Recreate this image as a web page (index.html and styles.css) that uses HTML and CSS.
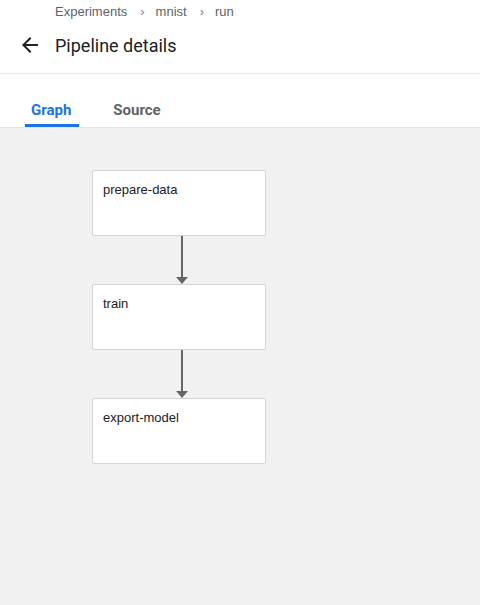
FILE: index.html
```html
<!DOCTYPE html>
<html>
<head>
<meta charset="utf-8">
<link rel="stylesheet" href="styles.css">
</head>
<body>
<div class="page">
  <header class="header">
    <nav class="crumbs">
      <span>Experiments</span><span class="sep">›</span><span>mnist</span><span class="sep">›</span><span>run</span>
    </nav>
    <div class="title-row">
      <svg class="back" width="24" height="24" viewBox="0 0 24 24"><path d="M20 11H7.83l5.59-5.59L12 4l-8 8 8 8 1.41-1.41L7.83 13H20v-2z" fill="#202124"/></svg>
      <h1 class="title">Pipeline details</h1>
    </div>
  </header>
  <div class="tabs">
    <div class="tab active">Graph</div>
    <div class="tab">Source</div>
  </div>
  <main class="canvas">
    <div class="graph">
      <div class="node">prepare-data</div>
      <div class="edge"><div class="line"></div><div class="head"></div></div>
      <div class="node">train</div>
      <div class="edge"><div class="line"></div><div class="head"></div></div>
      <div class="node">export-model</div>
    </div>
  </main>
</div>
</body>
</html>
```
FILE: styles.css
```css
* { box-sizing: border-box; }
html, body { margin: 0; padding: 0; height: 100%; }
body { font-family: "Roboto", "Liberation Sans", sans-serif; color: #202124; background: #fff; }
.page { display: flex; flex-direction: column; height: 605px; }
.header { border-bottom: 1px solid #e8e8e8; height: 74px; }
.crumbs { display: flex; align-items: center; padding-left: 55px; height: 22px; font-family: "Liberation Sans", Arial, sans-serif; font-size: 13px; color: #5f6368; }
.crumbs .sep { margin: 0 11px 0 13px; font-size: 13px; color: #80868b; }
.title-row { display: flex; align-items: center; height: 46px; padding-left: 18px; }
.back { margin-right: 13px; }
.title { margin: 0; font-size: 18px; font-weight: 400; color: #202124; }
.tabs { display: flex; height: 53px; align-items: flex-end; padding-left: 25px; }
.tab { font-size: 15px; font-weight: 700; color: #5f6368; padding: 0 6px 5px 6px; display: flex; align-items: flex-start; }
.tab.active { color: #1a73e8; border-bottom: 3px solid #1a73e8; border-radius: 3px 3px 0 0; margin-right: 28px; padding-right: 8px; }
.tab:not(.active) { padding-bottom: 8px; }
.canvas { flex: 1; background: #f1f1f1; border-top: 1px solid #e4e4e4; padding: 42px 0 0 92px; }
.graph { display: flex; flex-direction: column; width: 174px; }
.node { width: 174px; height: 66px; background: #fff; border: 1px solid #d6d6d6; border-radius: 2px; padding: 11px 10px; font-family: "Liberation Sans", Arial, sans-serif; font-size: 13px; color: #202124; }
.edge { display: flex; flex-direction: column; align-items: center; height: 48px; width: 12px; margin-left: 84px; }
.line { width: 2px; flex: 1; background: #666; }
.head { width: 0; height: 0; border-left: 6px solid transparent; border-right: 6px solid transparent; border-top: 7px solid #666; }
```
